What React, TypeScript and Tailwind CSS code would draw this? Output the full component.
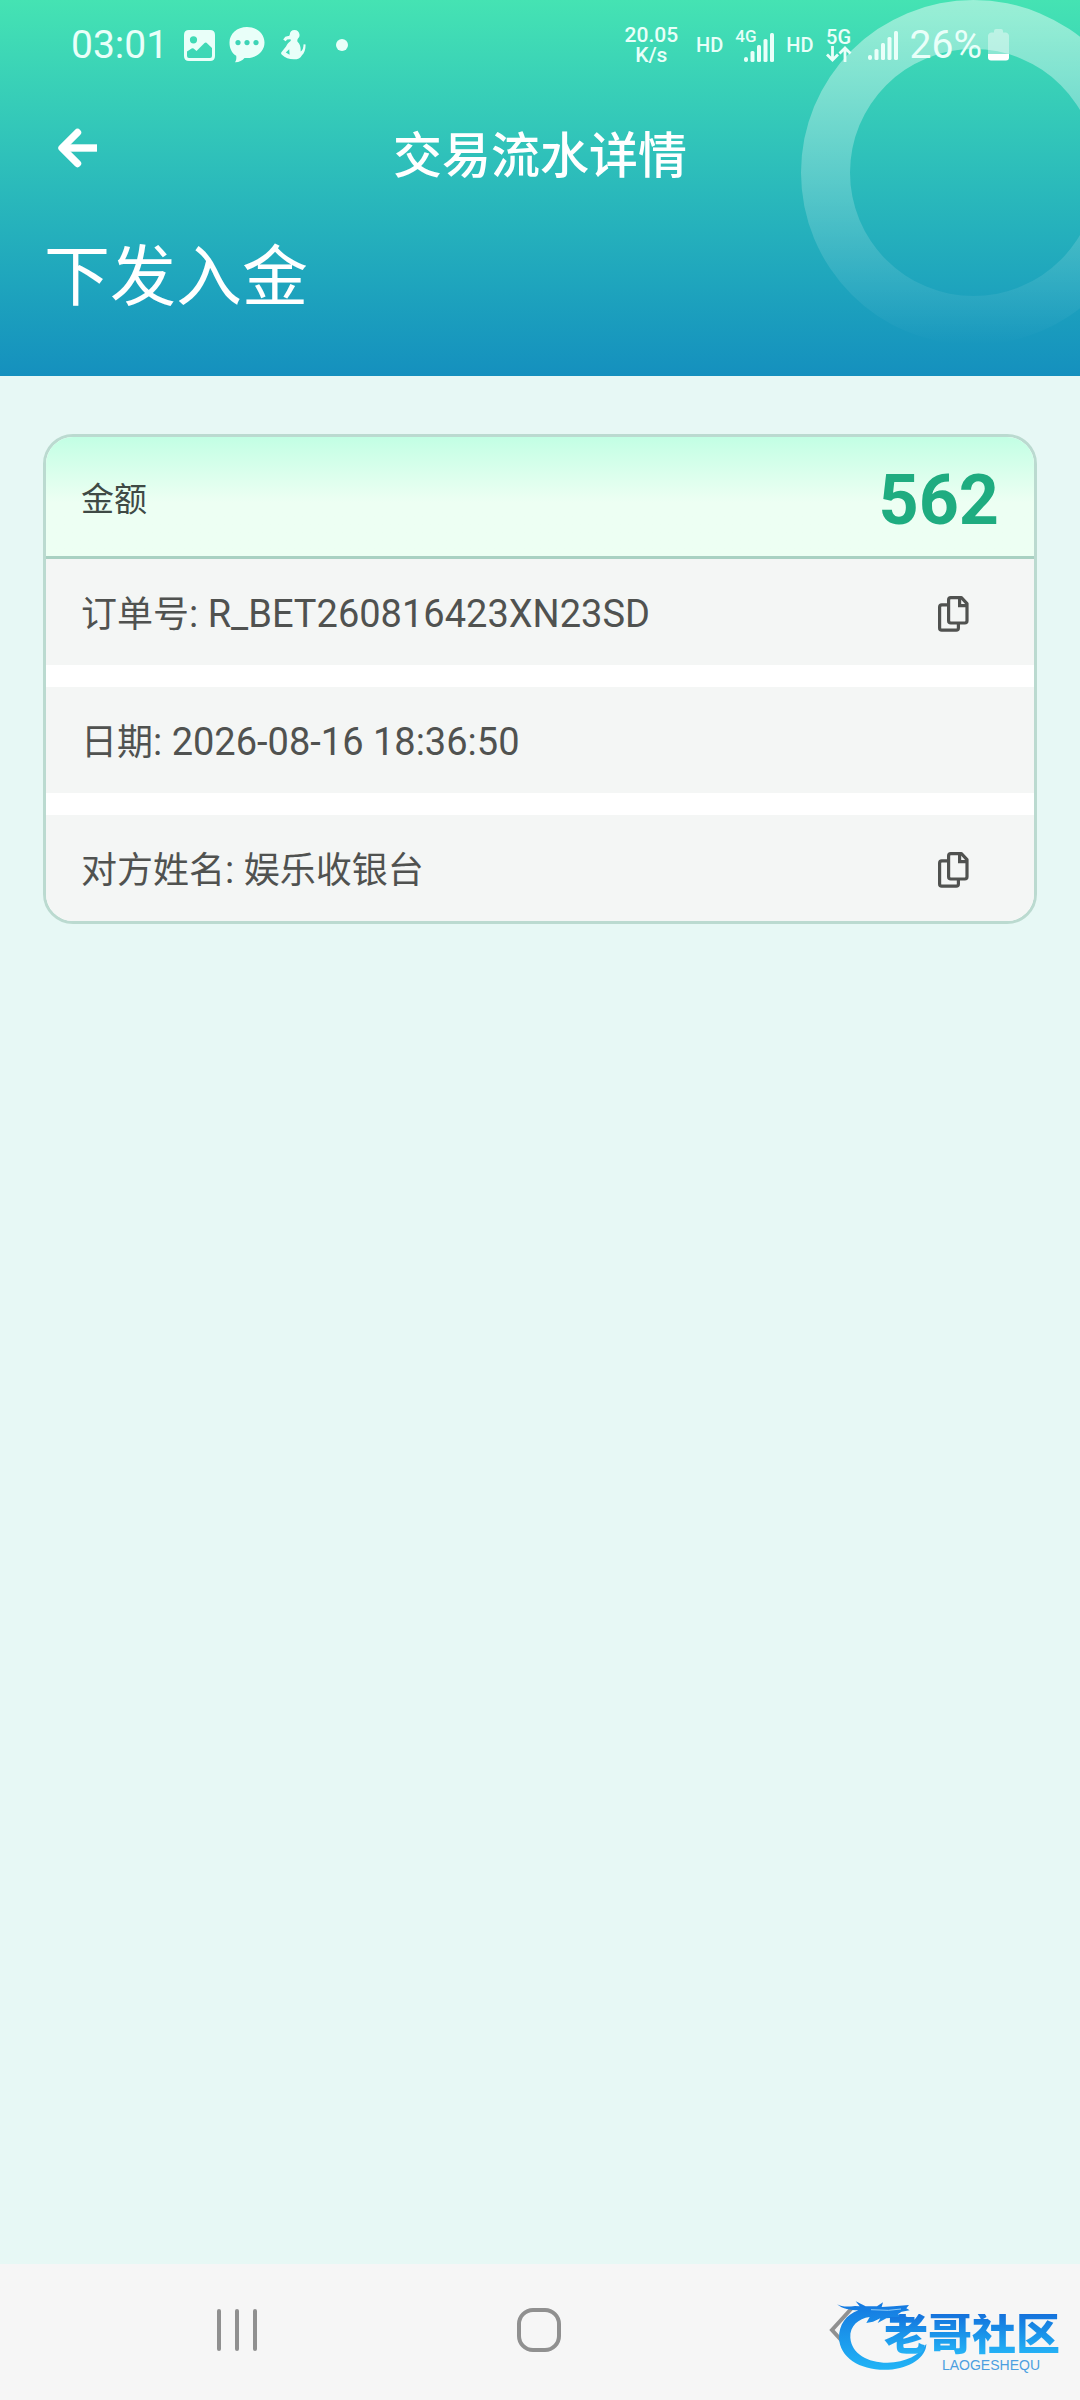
import React from 'react';

const rows = [
  { label: '订单号', value: 'R_BET260816423XN23SD', copy: true },
  { label: '日期', value: '2026-08-16 18:36:50', copy: false },
  { label: '对方姓名', value: '娱乐收银台', copy: true, cjk: true },
];

const SignalBars: React.FC<{ className?: string }> = ({ className }) => (
  <svg className={className} width="30" height="29" viewBox="0 0 30 29" fill="currentColor" aria-hidden="true">
    <rect x="0" y="24" width="4" height="5" rx="2" />
    <rect x="6.5" y="18" width="4" height="11" rx="1.5" />
    <rect x="13" y="12" width="4" height="17" rx="1.5" />
    <rect x="19.5" y="6" width="4" height="23" rx="1.5" />
    <rect x="26" y="0" width="4" height="29" rx="1.5" />
  </svg>
);

const CopyIcon: React.FC = () => (
  <svg width="31" height="36" viewBox="0 0 31 36" fill="none" stroke="currentColor" strokeWidth="3.2" strokeLinejoin="round" aria-hidden="true">
    <path d="M10 8.8H3.8Q1.6 8.8 1.6 11V32Q1.6 34.2 3.8 34.2H18.2Q20.4 34.2 20.4 32V28" />
    <path d="M12.8 1.6H23.4L29 7.6V24.8Q29 27 26.8 27H12.8Q10.6 27 10.6 24.8V3.8Q10.6 1.6 12.8 1.6Z" />
    <path d="M21.6 2V9.6H28.6" strokeLinejoin="miter" />
  </svg>
);

const StatusBar: React.FC = () => (
  <div className="relative flex h-[90px] items-center justify-between px-[71px] text-[#e9fff9]">
    <div className="flex items-center">
      <span className="text-[39px] leading-[40px]">03:01</span>
      <svg className="ml-4" width="31" height="31" viewBox="0 0 31 31" aria-hidden="true">
        <path
          fill="currentColor"
          fillRule="evenodd"
          d="M5 0H26Q31 0 31 5V26Q31 31 26 31H5Q0 31 0 26V5Q0 0 5 0ZM9.5 6.2A3.6 3.6 0 1 0 9.5 13.4A3.6 3.6 0 1 0 9.5 6.2ZM3 21.5V26Q3 28 5 28H26Q28 28 28 26V18L22.5 12.8Q21.5 12 20.5 13L12.5 21L9.6 18.6Q8.6 17.8 7.6 18.5Z"
        />
      </svg>
      <svg className="ml-3.5" width="36" height="36" viewBox="0 0 36 36" aria-hidden="true">
        <path
          fill="currentColor"
          d="M18 0C28 0 35.5 6.8 35.5 15.5C35.5 24.2 28 31 18.5 31H15.5C13.5 33.8 10 35.3 6 35.2C7.2 33.5 7.6 31.4 7.2 28.8C2.8 26 .5 21.5 .5 15.5C.5 6.8 8 0 18 0Z"
        />
        <g fill="#3dd4b6">
          <circle cx="9" cy="15.6" r="2.6" />
          <circle cx="18" cy="15.6" r="2.6" />
          <circle cx="27" cy="15.6" r="2.6" />
        </g>
      </svg>
      <svg className="ml-4" width="25" height="30" viewBox="0 0 25 30" fill="currentColor" aria-hidden="true">
        <path
          fillRule="evenodd"
          d="M13.5 0C10.7 0 8.8 1.9 8.8 4.4C8.8 5.3 8.3 5.8 7.2 6L4.3 6.7L2.2 9.6L4.6 11.2L6.2 9.4L9.4 9.2C10 10.2 10 10.8 9 11.6C7.2 12.9 6.4 14 5 16.4L.4 22.2C-.2 23.2 .1 24.1 .9 24.7C4 28 8.3 29.3 12.8 29.3C17 29.3 19.4 28 20.8 25.4C23.4 23.4 24.6 19.5 24.6 14.6L22.6 14.2C22.4 18 21.6 20.5 19.6 21.6C20 17.4 19 14 16.8 11.9C16 11 16.2 10 17 8.6C18.2 7.4 18.7 6.2 18.5 4.6C18.3 1.8 16.2 0 13.5 0ZM8.2 19.2L8.6 24.8L4.8 22.4Z"
        />
      </svg>
      <span className="ml-[30px] size-3 rounded-full bg-current" />
    </div>

    <div className="flex items-center font-medium">
      <div className="flex flex-col items-center text-[21px] leading-5">
        <span>20.05</span>
        <span>K/s</span>
      </div>
      <span className="ml-[18px] text-[20px] leading-5">HD</span>
      <div className="relative ml-3 h-[34px] w-[39px]">
        <span className="absolute left-0 top-0 text-[17px] leading-4">4G</span>
        <SignalBars className="absolute bottom-0 right-0" />
      </div>
      <span className="ml-3 text-[20px] leading-5">HD</span>
      <div className="ml-3 flex flex-col items-center">
        <span className="text-[20px] leading-[18px]">5G</span>
        <svg width="26" height="16" viewBox="0 0 26 16" fill="none" stroke="currentColor" strokeWidth="2.8" aria-hidden="true">
          <path d="M6.5 0V14M1 8.5L6.5 14L12 8.5" />
          <path d="M19 16V2M13.5 7.5L19 2L24.5 7.5" />
        </svg>
      </div>
      <SignalBars className="ml-4" />
      <span className="ml-3 text-[39px] font-normal leading-[40px]">26%</span>
      <svg className="ml-1.5" width="21" height="32" viewBox="0 0 21 32" aria-hidden="true">
        <path fill="#fff" fillOpacity=".4" d="M6 2Q6 0 8 0H13Q15 0 15 2V3.5H18Q21 4.5 21 7V25H0V7Q0 4.5 3 3.5H6Z" />
        <path fill="#fff" d="M0 25H21V28.5Q21 31.5 18 31.5H3Q0 31.5 0 28.5Z" />
      </svg>
    </div>
  </div>
);

const Watermark: React.FC = () => (
  <div className="absolute right-[20px] top-[34px] h-[73px] w-[226px]">
    <svg className="absolute left-0 top-0" width="93" height="73" viewBox="105 147 279 219" aria-hidden="true">
      <defs>
        <linearGradient id="dragon" x1="0" y1="0" x2="0" y2="1">
          <stop offset="0" stopColor="#1477e0" />
          <stop offset="1" stopColor="#22b4f6" />
        </linearGradient>
      </defs>
      <path
        fill="url(#dragon)"
        d="M114 166C128 174 146 174 168 171L182 172L170 157L200 172L234 172L252 160L248 174L284 172L330 168L322 178L332 184L308 188L296 196L326 204L318 212L284 206L262 208L236 222L244 208L222 218L202 222L212 204C178 208 152 232 154 266C158 314 206 341 265 341C320 340 362 318 382 284C382 324 334 358 268 362C188 366 122 328 120 266C120 228 140 198 178 184C156 184 130 180 114 166Z"
      />
      <path d="M216 182L268 184L306 180" stroke="#8fccf7" strokeWidth="3" fill="none" />
    </svg>
    <div className="absolute right-0 top-4 flex flex-col items-end">
      <span className="bg-gradient-to-b from-[#1672dc] to-[#27b6f7] bg-clip-text text-[44px] font-black leading-[42px] text-transparent">
        老哥社区
      </span>
      <span className="mr-5 font-['Liberation_Sans'] text-[14px] leading-[18px] text-[#4c9fe0]">LAOGESHEQU</span>
    </div>
  </div>
);

const App: React.FC = () => {
  return (
    <div className="flex min-h-screen flex-col bg-[#e7f8f5] font-[Roboto,'Noto_Sans_CJK_SC',sans-serif]">
      {/* Header */}
      <header className="relative overflow-hidden bg-gradient-to-b from-[#45e3b3] to-[#1590be] pb-11 text-white">
        <svg className="absolute -right-[66px] top-0" width="345" height="345" viewBox="0 0 345 345" aria-hidden="true">
          <defs>
            <linearGradient id="ring" x1="0" y1="0" x2="0" y2="1">
              <stop offset="0" stopColor="#fff" stopOpacity=".46" />
              <stop offset="1" stopColor="#fff" stopOpacity="0" />
            </linearGradient>
          </defs>
          <path
            fill="url(#ring)"
            fillRule="evenodd"
            d="M172.5 0A172.5 172.5 0 1 1 172.5 345A172.5 172.5 0 1 1 172.5 0ZM172.5 49A123.5 123.5 0 1 0 172.5 296A123.5 123.5 0 1 0 172.5 49Z"
          />
        </svg>

        <StatusBar />

        <div className="relative grid h-[134px] grid-cols-[1fr_auto_1fr] items-center px-[57px]">
          <button type="button" aria-label="返回" className="justify-self-start pb-[18px]">
            <svg width="40" height="40" viewBox="0 0 40 40" fill="none" stroke="currentColor" strokeWidth="7.4" aria-hidden="true">
              <path d="M40 20H8" />
              <path d="M20.5 4.5L5 20L20.5 35.5" strokeLinecap="round" strokeLinejoin="round" />
            </svg>
          </button>
          <h1 className="text-[49px] font-medium leading-[60px]">交易流水详情</h1>
        </div>

        <h2 className="relative px-11 text-[66px] leading-[108px]">下发入金</h2>
      </header>

      {/* Transaction card */}
      <main className="flex-1 px-[43px] pt-[58px]">
        <section className="overflow-hidden rounded-[30px] border-[3px] border-[#bbdad0] bg-white">
          <div className="flex h-[122px] items-center justify-between border-b-[3px] border-[#a9d1c2] bg-gradient-to-b from-[#c2ffe4] to-[#edfff3] to-55% px-[35px] pt-1.5">
            <span className="text-[33px] leading-[40px] text-[#3f4a45]">金额</span>
            <span className="text-[70px] font-bold leading-[80px] text-[#1fac80]">562</span>
          </div>
          <div className="flex flex-col gap-[22px]">
            {rows.map((row) => (
              <div key={row.label} className="flex h-[106px] items-center justify-between bg-[#f4f6f5] pl-[35px] pr-[65px] pt-1 text-[38px] leading-[44px] text-[#505250]">
                <p>
                  <span className="text-[36px]">{row.label}</span>: <span className={row.cjk ? 'text-[36px]' : ''}>{row.value}</span>
                </p>
                {row.copy && (
                  <button type="button" aria-label={`复制${row.label}`}>
                    <CopyIcon />
                  </button>
                )}
              </div>
            ))}
          </div>
        </section>
      </main>

      {/* System navigation */}
      <nav className="relative h-[136px] bg-[#f6f6f6] pl-[86px] pr-[88px] text-[#909090]">
        <div className="grid h-[132px] grid-cols-3 place-items-center">
          <button type="button" aria-label="最近任务" className="flex gap-3.5">
            <span className="h-[42px] w-1 rounded-full bg-current" />
            <span className="h-[42px] w-1 rounded-full bg-current" />
            <span className="h-[42px] w-1 rounded-full bg-current" />
          </button>
          <button type="button" aria-label="主屏幕" className="size-11 rounded-[16px] border-4 border-current" />
          <button type="button" aria-label="后退">
            <svg width="24" height="48" viewBox="0 0 24 48" fill="none" stroke="currentColor" strokeWidth="4" aria-hidden="true">
              <path d="M23 2L3 24L23 46" />
            </svg>
          </button>
        </div>
        <Watermark />
      </nav>
    </div>
  );
};

export default App;
